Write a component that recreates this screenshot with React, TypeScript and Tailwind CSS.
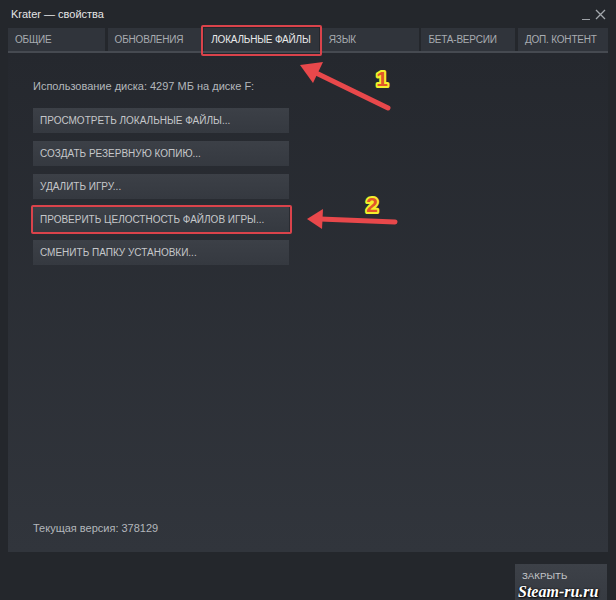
import React from 'react'

const tabs = [
  { label: 'ОБЩИЕ', w: 'w-[97px]' },
  { label: 'ОБНОВЛЕНИЯ', w: 'w-[94px]' },
  { label: 'ЛОКАЛЬНЫЕ ФАЙЛЫ', w: 'w-[115px]', active: true },
  { label: 'ЯЗЫК', w: 'w-[97px]' },
  { label: 'БЕТА-ВЕРСИИ', w: 'w-[94px]' },
  { label: 'ДОП. КОНТЕНТ', w: 'w-[90px]' },
]

const actions = [
  'ПРОСМОТРЕТЬ ЛОКАЛЬНЫЕ ФАЙЛЫ...',
  'СОЗДАТЬ РЕЗЕРВНУЮ КОПИЮ...',
  'УДАЛИТЬ ИГРУ...',
  'ПРОВЕРИТЬ ЦЕЛОСТНОСТЬ ФАЙЛОВ ИГРЫ...',
  'СМЕНИТЬ ПАПКУ УСТАНОВКИ...',
]

function Marker({ n, x, y }: { n: string; x: number; y: number }) {
  return (
    <text
      x={x}
      y={y}
      textAnchor="middle"
      fontFamily="'Liberation Sans', Arial, sans-serif"
      fontWeight="bold"
      fontSize="21"
      fill="#e2552a"
      stroke="#f3ef2c"
      strokeWidth="4"
      strokeLinejoin="round"
      style={{ paintOrder: 'stroke' }}
    >
      {n}
    </text>
  )
}

export default function App() {
  return (
    <div className="relative h-[600px] w-[616px] overflow-hidden bg-[#24272c] font-['Liberation_Sans',Arial,sans-serif]">
      {/* title bar */}
      <div className="flex h-[28px] items-center justify-between pl-[11px] pr-[10px]">
        <span className="text-[11px] text-[#e4e5e6]">Krater — свойства</span>
        <div className="flex items-end gap-[5px] text-[#9ea2a7]">
          <span className="mt-[6px] block h-[1px] w-[8px] bg-[#9ea2a7]" />
          <svg width="11" height="11" viewBox="0 0 11 11">
            <path d="M1 1 L10 10 M10 1 L1 10" stroke="#a3a7ac" strokeWidth="1.3" />
          </svg>
        </div>
      </div>

      {/* tabs */}
      <div className="mx-[8px] flex justify-between">
        {tabs.map((t) => (
          <div
            key={t.label}
            className={`${t.w} flex h-[23px] items-center whitespace-nowrap bg-[#30343b] px-[7px] text-[10px] tracking-[-0.2px] ${
              t.active ? 'text-[#e8e9ea]' : 'text-[#a8acb1]'
            }`}
          >
            {t.label}
          </div>
        ))}
      </div>
      <div className="mx-[8px] h-[2px] bg-[#464a51]" />

      {/* content panel */}
      <div className="mx-[8px] flex h-[499px] flex-col bg-gradient-to-b from-[#25282e] to-[#31353c] pl-[25px]">
        <div className="mt-[25px] text-[11px] text-[#b3b7bb]">
          Использование диска: 4297 МБ на диске F:
        </div>
        <div className="mt-[13px] flex flex-col gap-[8px]">
          {actions.map((a) => (
            <div
              key={a}
              className="flex h-[25px] w-[256px] items-center whitespace-nowrap bg-gradient-to-b from-[#3c4047] to-[#353940] pl-[7px] text-[10px] text-[#c5c7ca]"
            >
              {a}
            </div>
          ))}
        </div>
        <div className="mt-auto mb-[16px] text-[11px] text-[#b3b7bb]">Текущая версия: 378129</div>
      </div>

      {/* footer */}
      <div className="flex justify-end pr-[9px] pt-[12px]">
        <div className="h-[40px] w-[92px] bg-gradient-to-b from-[#3d4148] to-[#363a41] pl-[7px] pt-[5px] text-[9.7px] text-[#c5c7ca]">
          ЗАКРЫТЬ
        </div>
      </div>

      {/* annotations */}
      <div className="pointer-events-none absolute left-[201px] top-[25px] h-[31px] w-[121px] rounded-[2px] border-[2.5px] border-[#da434b]" />
      <div className="pointer-events-none absolute left-[31px] top-[205px] h-[29px] w-[261px] rounded-[2px] border-[2.5px] border-[#da434b]" />

      <svg className="pointer-events-none absolute left-0 top-0" width="616" height="600">
        <line x1="388" y1="108" x2="312" y2="71" stroke="#e8484b" strokeWidth="5" strokeLinecap="round" />
        <polygon points="300,65 323,62 313,83" fill="#e8484b" />
        <line x1="395" y1="222" x2="320" y2="219" stroke="#e8484b" strokeWidth="5" strokeLinecap="round" />
        <polygon points="307,219 323,209 322,229" fill="#e8484b" />
        <Marker n="1" x={382} y={86} />
        <Marker n="2" x={372} y={212} />
      </svg>

      <div className="pointer-events-none absolute left-[518px] top-[584px] font-['Liberation_Serif',serif] text-[16px] font-bold italic leading-none text-white [text-shadow:0_0_2px_#000,1px_1px_2px_#000]">
        Steam-ru.ru
      </div>
    </div>
  )
}
